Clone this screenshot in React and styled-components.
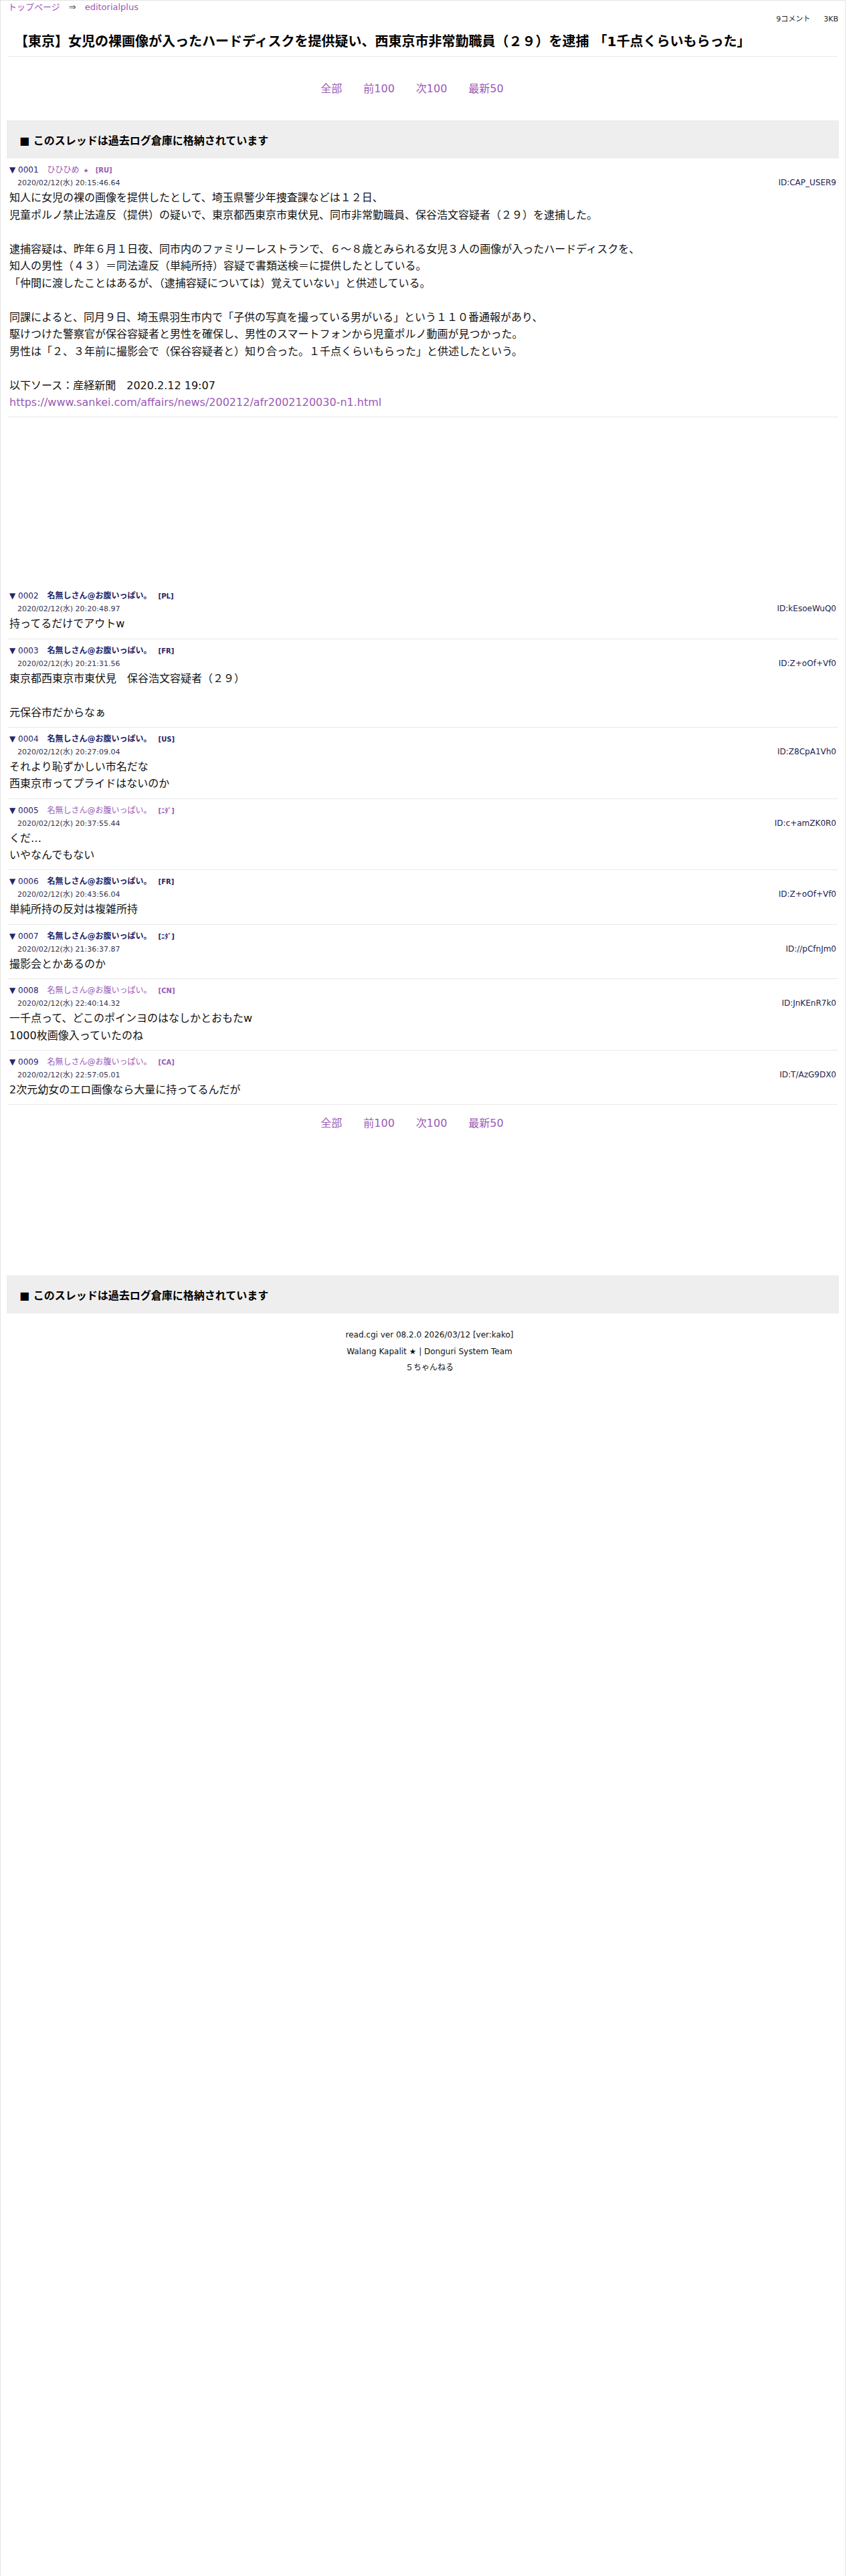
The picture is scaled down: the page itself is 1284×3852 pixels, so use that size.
import React from 'react';
import styled, { createGlobalStyle } from 'styled-components';

const GlobalStyle = createGlobalStyle`
  html, body {
    margin: 0;
    padding: 0;
    background: #fff;
  }
  body {
    font-family: "DejaVu Sans", "Noto Sans CJK JP", sans-serif;
    color: #111;
  }
  a {
    text-decoration: none;
  }
`;

const posts = [
  {
    no: '0001',
    name: 'ひひひめ',
    star: true,
    tag: 'RU',
    mail: true,
    date: '2020/02/12(水) 20:15:46.64',
    id: 'ID:CAP_USER9',
    lines: [
      '知人に女児の裸の画像を提供したとして、埼玉県警少年捜査課などは１２日、',
      '児童ポルノ禁止法違反（提供）の疑いで、東京都西東京市東伏見、同市非常勤職員、保谷浩文容疑者（２９）を逮捕した。',
      '',
      '逮捕容疑は、昨年６月１日夜、同市内のファミリーレストランで、６〜８歳とみられる女児３人の画像が入ったハードディスクを、',
      '知人の男性（４３）＝同法違反（単純所持）容疑で書類送検＝に提供したとしている。',
      '「仲間に渡したことはあるが、（逮捕容疑については）覚えていない」と供述している。',
      '',
      '同課によると、同月９日、埼玉県羽生市内で「子供の写真を撮っている男がいる」という１１０番通報があり、',
      '駆けつけた警察官が保谷容疑者と男性を確保し、男性のスマートフォンから児童ポルノ動画が見つかった。',
      '男性は「２、３年前に撮影会で（保谷容疑者と）知り合った。１千点くらいもらった」と供述したという。',
      '',
      '以下ソース：産経新聞　2020.2.12 19:07',
    ],
    link: 'https://www.sankei.com/affairs/news/200212/afr2002120030-n1.html',
    adAfter: true,
  },
  {
    no: '0002', tag: 'PL', date: '2020/02/12(水) 20:20:48.97', id: 'ID:kEsoeWuQ0',
    lines: ['持ってるだけでアウトw'],
  },
  {
    no: '0003', tag: 'FR', date: '2020/02/12(水) 20:21:31.56', id: 'ID:Z+oOf+Vf0',
    lines: ['東京都西東京市東伏見　保谷浩文容疑者（２９）', '', '元保谷市だからなぁ'],
  },
  {
    no: '0004', tag: 'US', date: '2020/02/12(水) 20:27:09.04', id: 'ID:Z8CpA1Vh0',
    lines: ['それより恥ずかしい市名だな', '西東京市ってプライドはないのか'],
  },
  {
    no: '0005', tag: 'ﾆﾀﾞ', mail: true, date: '2020/02/12(水) 20:37:55.44', id: 'ID:c+amZK0R0',
    lines: ['くだ…', 'いやなんでもない'],
  },
  {
    no: '0006', tag: 'FR', date: '2020/02/12(水) 20:43:56.04', id: 'ID:Z+oOf+Vf0',
    lines: ['単純所持の反対は複雑所持'],
  },
  {
    no: '0007', tag: 'ﾆﾀﾞ', date: '2020/02/12(水) 21:36:37.87', id: 'ID://pCfnJm0',
    lines: ['撮影会とかあるのか'],
  },
  {
    no: '0008', tag: 'CN', mail: true, date: '2020/02/12(水) 22:40:14.32', id: 'ID:JnKEnR7k0',
    lines: ['一千点って、どこのポインヨのはなしかとおもたw', '1000枚画像入っていたのね'],
  },
  {
    no: '0009', tag: 'CA', mail: true, date: '2020/02/12(水) 22:57:05.01', id: 'ID:T/AzG9DX0',
    lines: ['2次元幼女のエロ画像なら大量に持ってるんだが'],
  },
];

const PageNav = () => (
  <Nav>
    <NavLink href="#">全部</NavLink>
    <NavLink href="#">前100</NavLink>
    <NavLink href="#">次100</NavLink>
    <NavLink href="#">最新50</NavLink>
  </Nav>
);

const Post = ({ post }) => (
  <PostBox>
    <PostHead>
      <PostNo>▼ {post.no}</PostNo>
      <PostName $mail={post.mail}>
        {post.name || '名無しさん@お腹いっぱい。'}
        {post.star && <Star>★</Star>}
      </PostName>
      <PostTag $mail={post.mail}>[{post.tag}]</PostTag>
    </PostHead>
    <PostMeta>
      <PostDate>{post.date}</PostDate>
      <PostId>{post.id}</PostId>
    </PostMeta>
    <PostBody>
      {post.lines.map((l, i) => (
        <BodyLine key={`line${i}`}>{l || '\u00a0'}</BodyLine>
      ))}
      {post.link && (
        <BodyLine>
          <BodyLink href="#">{post.link}</BodyLink>
        </BodyLine>
      )}
    </PostBody>
  </PostBox>
);

const App = () => {
  return (
    <>
      <GlobalStyle />
      <Page>
        <Crumbs>
          <CrumbLink href="#">トップページ</CrumbLink>
          <CrumbArrow>⇒</CrumbArrow>
          <CrumbLink href="#">editorialplus</CrumbLink>
        </Crumbs>
        <ThreadInfo>
          <span>9コメント</span>
          <span>3KB</span>
        </ThreadInfo>
        <Title>【東京】女児の裸画像が入ったハードディスクを提供疑い、西東京市非常勤職員（２９）を逮捕 「1千点くらいもらった」</Title>

        <PageNav />
        <Archived>■ このスレッドは過去ログ倉庫に格納されています</Archived>

        {posts.map((p) => (
          <React.Fragment key={p.no}>
            <Post post={p} />
            {p.adAfter && <AdSlot $h={250} />}
          </React.Fragment>
        ))}

        <PageNav />
        <AdSlot $h={180} />
        <Archived>■ このスレッドは過去ログ倉庫に格納されています</Archived>

        <Footer>
          <div>read.cgi ver 08.2.0 2026/03/12 [ver:kako]</div>
          <div>Walang Kapalit ★ | Donguri System Team</div>
          <div>５ちゃんねる</div>
        </Footer>
      </Page>
    </>
  );
};

const Page = styled.div`
  box-sizing: border-box;
  width: 1264px;
  min-height: 100vh;
  padding: 0 9px;
  border: 1px solid #e4e4e4;
  border-bottom: none;
`;

const Crumbs = styled.div`
  padding: 1px 2px 0;
  font-size: 13px;
  line-height: 18px;
`;

const CrumbLink = styled.a`
  color: #9b59b6;
`;

const CrumbArrow = styled.span`
  color: #444;
  margin: 0 13px;
`;

const ThreadInfo = styled.div`
  display: flex;
  justify-content: flex-end;
  gap: 20px;
  margin-top: 2px;
  padding-right: 1px;
  font-size: 11px;
  line-height: 14px;
  color: #222;
`;

const Title = styled.h1`
  margin: 12px 2px 20px;
  padding: 0 0 8px 10px;
  border-bottom: 1px solid #eaeaea;
  font-size: 20px;
  line-height: 28px;
  font-weight: bold;
  color: #000;
`;

const Nav = styled.div`
  padding: 18px 0;
  text-align: center;
  font-size: 16px;
  line-height: 20px;
`;

const NavLink = styled.a`
  color: #9b59b6;
  margin-right: 32px;
`;

const Archived = styled.div`
  margin-top: 19px;
  height: 57px;
  padding-left: 19px;
  display: flex;
  align-items: center;
  background-color: #eeeeee;
  font-size: 16px;
  font-weight: bold;
  color: #000;
`;

const PostBox = styled.div`
  margin: 0 2px;
  padding: 8px 2px 8.8px;
  border-bottom: 1px solid #e8e8e8;
`;

const PostHead = styled.div`
  display: flex;
  align-items: baseline;
  height: 18px;
  line-height: 18px;
  font-size: 12px;
`;

const PostNo = styled.span`
  color: #25256b;
  margin-right: 13px;
`;

const PostName = styled.span`
  color: ${(p) => (p.$mail ? '#9b59b6' : '#1f1f66')};
  font-weight: ${(p) => (p.$mail ? 'normal' : 'bold')};
  margin-right: 10px;
`;

const Star = styled.span`
  font-size: 9px;
  margin-left: 6px;
`;

const PostTag = styled.span`
  color: ${(p) => (p.$mail ? '#9b59b6' : '#1f1f66')};
  font-size: 10px;
  font-weight: bold;
`;

const PostMeta = styled.div`
  display: flex;
  justify-content: space-between;
  align-items: baseline;
  height: 20px;
  line-height: 20px;
  padding-left: 12px;
`;

const PostDate = styled.span`
  font-size: 11px;
  color: #33334d;
`;

const PostId = styled.span`
  font-size: 12px;
  color: #22224d;
`;

const PostBody = styled.div`
  font-size: 16px;
  line-height: 25.5px;
  color: #111;
`;

const BodyLine = styled.div`
  white-space: nowrap;
`;

const BodyLink = styled.a`
  color: #9b59b6;
`;

const AdSlot = styled.div`
  height: ${(p) => p.$h}px;
`;

const Footer = styled.div`
  margin-top: 20px;
  padding-left: 20px;
  text-align: center;
  font-size: 12px;
  line-height: 24.5px;
  color: #111;
`;

export default App;
